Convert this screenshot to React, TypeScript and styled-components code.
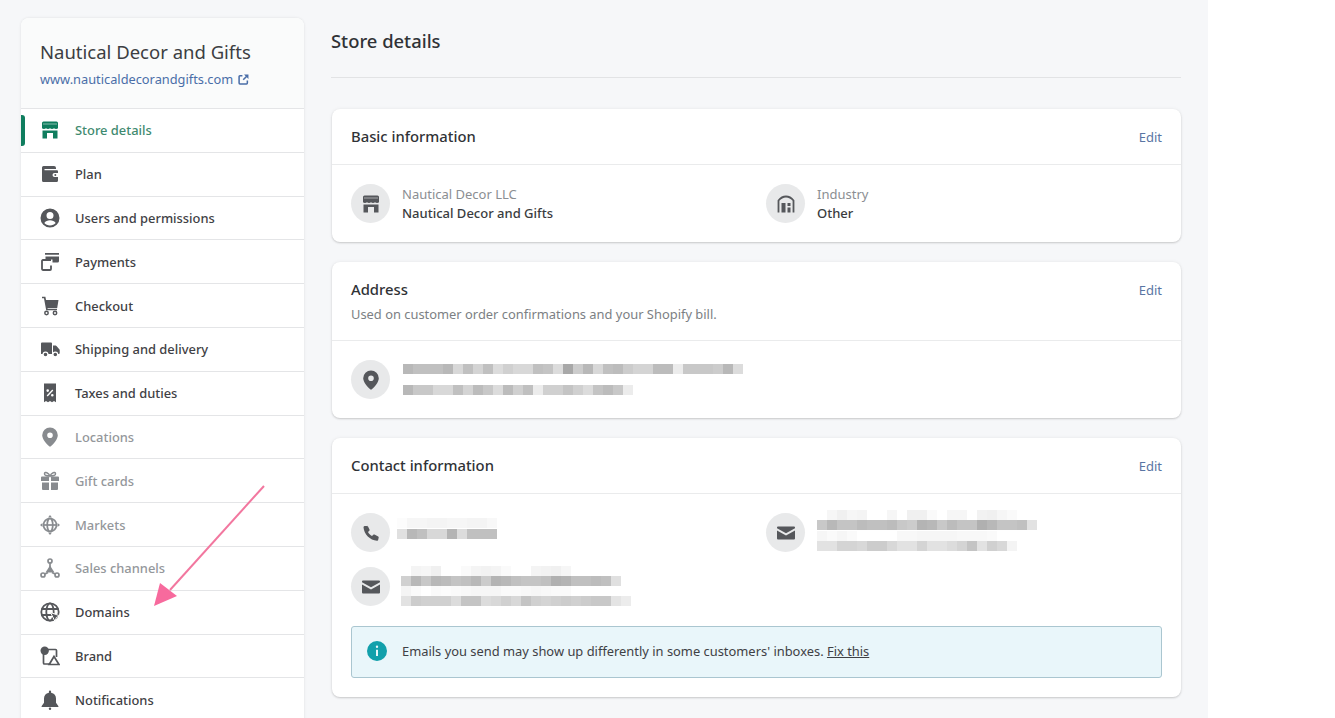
import React from 'react';
import styled, { createGlobalStyle } from 'styled-components';

const GlobalStyle = createGlobalStyle`
    html, body {
        margin: 0;
        padding: 0;
        background: #fff;
    }
    body {
        font-family: "Noto Sans", "Open Sans", "Liberation Sans", sans-serif;
        color: #303236;
    }
    * {
        box-sizing: border-box;
    }
`;

const Shell = styled.div`
    position: relative;
    display: flex;
    gap: 27px;
    width: 1208px;
    height: 718px;
    padding: 18px 27px 0 21px;
    overflow: hidden;
    background: #f6f7f9;
`;

const Sidebar = styled.aside`
    flex: 0 0 283px;
    align-self: flex-start;
    border-radius: 8px 8px 0 0;
    overflow: hidden;
    background: #fff;
    box-shadow: 0 0 3px rgba(23, 24, 24, 0.1);
`;

const SidebarHead = styled.header`
    height: 90px;
    padding: 21px 19px 0;
    background: #fafbfb;
`;

const ShopName = styled.div`
    font-size: 18.5px;
    line-height: 26px;
    color: #3c3e42;
`;

const ShopLink = styled.a`
    display: flex;
    align-items: center;
    gap: 5px;
    margin-top: 5px;
    font-size: 12.8px;
    line-height: 18px;
    color: #4a6ea8;
`;

const NavRow = styled.div<{ $tone: 'normal' | 'muted' | 'active' }>`
    position: relative;
    display: flex;
    align-items: center;
    gap: 15px;
    height: 43.8px;
    padding-left: 19px;
    border-top: 1px solid #e4e5e7;
    font-size: 12.9px;
    font-weight: 500;
    color: ${(p) =>
        p.$tone === 'active'
            ? '#3f8a70'
            : p.$tone === 'muted'
              ? '#94979b'
              : '#3f4145'};
    svg {
        color: ${(p) =>
            p.$tone === 'active'
                ? '#0f7d5e'
                : p.$tone === 'muted'
                  ? '#888b8f'
                  : '#55575b'};
    }
`;

const ActiveMark = styled.span`
    position: absolute;
    left: 0;
    top: 6px;
    bottom: 6px;
    width: 4px;
    border-radius: 0 3px 3px 0;
    background: #0f7d5e;
`;

const Main = styled.main`
    flex: 0 0 850px;
`;

const PageHead = styled.h1`
    height: 60px;
    margin: 0 0 31px;
    padding-top: 9px;
    border-bottom: 1px solid #e2e3e5;
    font-size: 18.4px;
    font-weight: 500;
    line-height: 28px;
    color: #303236;
`;

const Stack = styled.div`
    display: flex;
    flex-direction: column;
    gap: 20px;
    margin-left: 1px;
`;

const Card = styled.section`
    border-radius: 8px;
    background: #fff;
    box-shadow: 0 0 4px rgba(23, 24, 24, 0.05), 0 1px 2px rgba(23, 24, 24, 0.18);
`;

const CardHead = styled.div<{ $tall?: boolean }>`
    display: flex;
    justify-content: space-between;
    align-items: flex-start;
    height: ${(p) => (p.$tall ? '79px' : '56px')};
    padding: 17px 19px 0;
    border-bottom: 1px solid #eaebec;
`;

const CardTitle = styled.h2`
    margin: 0;
    font-size: 14.8px;
    font-weight: 500;
    line-height: 20px;
    color: #303236;
`;

const CardHint = styled.p`
    margin: 6px 0 0;
    font-size: 12.9px;
    line-height: 18px;
    color: #7c7f84;
`;

const EditLink = styled.a`
    font-size: 13px;
    line-height: 22px;
    color: #5a75a3;
`;

const CardBody = styled.div`
    padding: 19px 19px;
`;

const TwoCols = styled.div`
    display: grid;
    grid-template-columns: 396px 396px;
    grid-auto-rows: 39px;
    column-gap: 19px;
    row-gap: 15px;
`;

const Item = styled.div<{ $gap?: number }>`
    display: flex;
    align-items: center;
    height: 39px;
    gap: ${(p) => p.$gap ?? 12}px;
`;

const IconCircle = styled.div`
    display: flex;
    flex: 0 0 39px;
    justify-content: center;
    align-items: center;
    width: 39px;
    height: 39px;
    border-radius: 50%;
    background: #e8e9ea;
    color: #55575b;
`;

const ItemLabel = styled.div`
    font-size: 13px;
    line-height: 19px;
    color: #8b8e92;
`;

const ItemValue = styled.div`
    font-size: 13px;
    font-weight: 500;
    line-height: 19px;
    color: #3a3c40;
`;

const Blurred = styled.div<{ $lift?: number }>`
    display: flex;
    flex-direction: column;
    filter: blur(0.5px);
    transform: translateY(${(p) => -(p.$lift ?? 0)}px);
`;

const BlurRow = styled.div<{ $space?: number }>`
    display: flex;
    height: 10px;
    margin-top: ${(p) => p.$space ?? 0}px;
`;

const BlurCell = styled.span`
    flex: 0 0 10px;
    height: 100%;
`;

const Banner = styled.div`
    display: flex;
    align-items: center;
    gap: 15px;
    height: 52px;
    margin-top: 20px;
    padding: 0 0 2px 15px;
    border: 1px solid #aac6d0;
    border-radius: 3px;
    background: #e9f6fa;
    font-size: 12.9px;
    color: #3f4145;
    a {
        color: #3f4145;
        text-decoration: underline;
    }
`;

const Glyph = styled.svg<{ $size?: number }>`
    flex: none;
    display: block;
    width: ${(p) => p.$size ?? 20}px;
    height: ${(p) => p.$size ?? 20}px;
    fill: currentColor;
`;

const ArrowMark = styled.svg`
    position: absolute;
    left: 150px;
    top: 480px;
    width: 120px;
    height: 130px;
`;

const StoreIcon = ({ size }: { size?: number }) => (
    <Glyph viewBox="0 0 20 20" $size={size}>
        <path d="M3.500 1.500h13A1.500 1.500 0 0 1 18 3v5.200c-.9.9-2.900.9-4 0-1 .9-3 .9-4 0-1 .9-3 .9-4 0-1.100.9-3.100.9-4 0V3a1.500 1.500 0 0 1 1.500-1.500z" />
        <path d="M3 4h14" stroke="#fff" strokeWidth=".9" opacity=".55" />
        <path d="M2.500 10.500h15V18.500h-4.500V13H7v5.500H2.500z" />
    </Glyph>
);

const PlanIcon = () => (
    <Glyph viewBox="0 0 20 20">
        <path
            fillRule="evenodd"
            d="M3.500 2H14a2 2 0 0 1 2 2v1H4.500v1.200H17A1 1 0 0 1 18 7.200V9h-3.500a2 2 0 0 0 0 4H18v3.500a1.500 1.500 0 0 1-1.500 1.500h-13A1.500 1.500 0 0 1 2 16.500v-13A1.500 1.500 0 0 1 3.500 2z"
        />
        <circle cx="15.300" cy="11" r="1" />
    </Glyph>
);

const UserIcon = () => (
    <Glyph viewBox="0 0 20 20">
        <path
            fillRule="evenodd"
            d="M10 .500a9.500 9.500 0 1 0 0 19 9.500 9.500 0 0 0 0-19zM10 4a3.500 3.500 0 1 1 0 7 3.500 3.500 0 0 1 0-7zM4.300 15c1.200-1.900 3.300-2.700 5.700-2.700s4.500.8 5.700 2.700c-1.400 1.600-3.400 2.500-5.700 2.500s-4.300-.9-5.700-2.500z"
        />
    </Glyph>
);

const PaymentsIcon = () => (
    <Glyph viewBox="0 0 20 20">
        <path d="M5 1h14v1.800H5z" />
        <path d="M5.500 4.500H19V9a1.500 1.500 0 0 1-1.500 1.500h-5V7.500H5.500z" />
        <path
            d="M11 8H2.900a.9.900 0 0 0-.9.900v8.200a.9.900 0 0 0 .9.900H10a1 1 0 0 0 1-1v-3.500"
            fill="none"
            stroke="currentColor"
            strokeWidth="1.800"
        />
    </Glyph>
);

const CartIcon = () => (
    <Glyph viewBox="0 0 20 20">
        <path d="M5.200 4H18.500l-1.300 8H6.500z" />
        <path
            d="M2 1.500h2.700l2.200 12H17"
            fill="none"
            stroke="currentColor"
            strokeWidth="1.700"
        />
        <circle cx="6.500" cy="17" r="1.700" fill="none" stroke="currentColor" strokeWidth="1.500" />
        <circle cx="15" cy="17" r="1.700" fill="none" stroke="currentColor" strokeWidth="1.500" />
    </Glyph>
);

const TruckIcon = () => (
    <Glyph viewBox="0 0 20 20">
        <path d="M2 3.500h9a1 1 0 0 1 1 1V15H1V4.500a1 1 0 0 1 1-1z" />
        <path d="M13 6.500h2.700a1 1 0 0 1 .8.400l3 3.600a1 1 0 0 1 .200.600V14a1 1 0 0 1-1 1h-5.700z" />
        <circle cx="5.500" cy="15.500" r="2.400" stroke="#fff" strokeWidth="1.200" />
        <circle cx="15.300" cy="15.500" r="2.400" stroke="#fff" strokeWidth="1.200" />
    </Glyph>
);

const TaxIcon = () => (
    <Glyph viewBox="0 0 20 20">
        <path
            fillRule="evenodd"
            d="M4 .500h12v18.800l-2-1.300-2 1.300-2-1.300-2 1.300-2-1.300-2 1.300zM12.300 6.500l-5.600 6 1 1 5.600-6zM7.700 6.300a1.300 1.300 0 1 0 0 2.600 1.300 1.300 0 0 0 0-2.600zM12.300 11a1.300 1.300 0 1 0 0 2.600 1.300 1.300 0 0 0 0-2.600z"
        />
    </Glyph>
);

const PinIcon = () => (
    <Glyph viewBox="0 0 20 20">
        <path
            fillRule="evenodd"
            d="M10 .500a7.800 7.800 0 0 0-7.800 7.800c0 4.200 5 9.400 7 11a1.200 1.200 0 0 0 1.600 0c2-1.600 7-6.800 7-11A7.800 7.800 0 0 0 10 .500zm0 5a2.800 2.800 0 1 1 0 5.600 2.800 2.800 0 0 1 0-5.600z"
        />
    </Glyph>
);

const GiftIcon = () => (
    <Glyph viewBox="0 0 20 20">
        <path d="M1 6.500a1 1 0 0 1 1-1h7v4.500H1zM11 5.500h7a1 1 0 0 1 1 1V10h-8zM2 11.500h7V19H3a1 1 0 0 1-1-1zM11 11.500h7V18a1 1 0 0 1-1 1h-6z" />
        <path
            d="M10 5C8.500 1.500 5 .500 4.500 2.500 4 4.500 7 5 10 5c3 0 6-.5 5.500-2.500C15 .500 11.500 1.500 10 5z"
            fill="none"
            stroke="currentColor"
            strokeWidth="1.500"
        />
    </Glyph>
);

const MarketsIcon = () => (
    <Glyph viewBox="0 0 20 20">
        <g fill="none" stroke="currentColor" strokeWidth="1.700">
            <circle cx="10" cy="10" r="6.500" />
            <ellipse cx="10" cy="10" rx="2.800" ry="6.500" />
            <path d="M3.500 10h13" />
        </g>
        <path d="M10 0l2 2.500H8zM10 20l-2-2.500h4zM0 10l2.500-2v4zM20 10l-2.500 2V8z" />
    </Glyph>
);

const ChannelsIcon = () => (
    <Glyph viewBox="0 0 20 20">
        <path d="M10 7.500l4.500 7H5.500z" />
        <g fill="none" stroke="currentColor" strokeWidth="1.700">
            <circle cx="10" cy="3" r="2" />
            <circle cx="3" cy="17" r="2" />
            <circle cx="17" cy="17" r="2" />
            <path d="M10 5v5M5 16l3-1.500M15 16l-3-1.500" />
        </g>
    </Glyph>
);

const DomainsIcon = () => (
    <Glyph viewBox="0 0 20 20">
        <g fill="none" stroke="currentColor" strokeWidth="1.800">
            <circle cx="10" cy="10" r="8.700" />
            <ellipse cx="10" cy="10" rx="3.700" ry="8.700" />
            <path d="M1.500 7h17M1.500 13h17" />
        </g>
        <path d="M10.500 10.500l9.500 3.400-3.600 1.500-1.400 4.100z" stroke="#fff" strokeWidth="1" />
    </Glyph>
);

const BrandIcon = () => (
    <Glyph viewBox="0 0 20 20">
        <path
            d="M6 3.500h9.500a1 1 0 0 1 1 1V11M3.500 8v9a1 1 0 0 0 1 1H9"
            fill="none"
            stroke="currentColor"
            strokeWidth="1.700"
        />
        <circle cx="4.700" cy="4.700" r="4.200" />
        <path
            d="M14 10.500l5 8H9.200z"
            fill="#fff"
            stroke="currentColor"
            strokeWidth="1.700"
        />
    </Glyph>
);

const BellIcon = () => (
    <Glyph viewBox="0 0 20 20">
        <path d="M10 .500a1.100 1.100 0 0 1 1.100 1.100v1.100A6 6 0 0 1 16 8.600v4.200l2.300 3.200a.6.600 0 0 1-.5 1H2.200a.6.600 0 0 1-.5-1L4 12.800V8.600a6 6 0 0 1 4.900-5.900V1.600A1.100 1.100 0 0 1 10 .500z" />
        <circle cx="10" cy="18.800" r="1.200" />
    </Glyph>
);

const IndustryIcon = () => (
    <Glyph viewBox="0 0 20 20">
        <path
            d="M2.500 18.500V6.500c2-2.500 5-4 7.500-4s5.500 1.500 7.500 4v12"
            fill="none"
            stroke="currentColor"
            strokeWidth="1.800"
        />
        <path d="M5.500 9h4v9.500h-4zM11.500 9h3v3h-3zM11.500 13.500h3v5h-3z" />
    </Glyph>
);

const PhoneIcon = () => (
    <Glyph viewBox="0 0 20 20">
        <path d="M6.500 2.500l2 4c.2.4.1.9-.2 1.200L7 9c.8 1.700 2.300 3.200 4 4l1.300-1.300c.3-.3.8-.4 1.200-.2l3.700 1.900c.4.2.6.6.5 1l-.5 2.300c-.1.600-.6 1-1.200 1C9 17.500 3 11 2.500 4.300c0-.6.400-1.100 1-1.200l2-.200c.4-.1.800.1 1 .6z" />
    </Glyph>
);

const MailIcon = () => (
    <Glyph viewBox="0 0 20 20">
        <path d="M1 4.500A1 1 0 0 1 2 3.500h16a1 1 0 0 1 1 1v.8l-9 5-9-5zM1 7.500l9 5 9-5v8a1 1 0 0 1-1 1H2a1 1 0 0 1-1-1z" />
    </Glyph>
);

const InfoGlyph = styled(Glyph)`
    color: #12a0ab;
`;

const InfoIcon = () => (
    <InfoGlyph viewBox="0 0 20 20" $size={20}>
        <path
            fillRule="evenodd"
            d="M10 0a10 10 0 1 0 0 20 10 10 0 0 0 0-20zm0 4.500a1.200 1.200 0 1 1 0 2.400 1.200 1.200 0 0 1 0-2.400zM9 8.700h2V15H9z"
        />
    </InfoGlyph>
);

const ExternalIcon = () => (
    <Glyph viewBox="0 0 20 20" $size={11}>
        <path
            d="M8 3H3.500A1.500 1.500 0 0 0 2 4.500v12A1.500 1.500 0 0 0 3.500 18h12a1.500 1.500 0 0 0 1.500-1.500V12"
            fill="none"
            stroke="currentColor"
            strokeWidth="2.800"
        />
        <path d="M11 1h8v8l-3-3-5.500 5.500-2-2L14 4z" />
    </Glyph>
);

const navItems: { label: string; icon: React.ReactElement; tone: 'normal' | 'muted' | 'active' }[] = [
    { label: 'Store details', icon: <StoreIcon />, tone: 'active' },
    { label: 'Plan', icon: <PlanIcon />, tone: 'normal' },
    { label: 'Users and permissions', icon: <UserIcon />, tone: 'normal' },
    { label: 'Payments', icon: <PaymentsIcon />, tone: 'normal' },
    { label: 'Checkout', icon: <CartIcon />, tone: 'normal' },
    { label: 'Shipping and delivery', icon: <TruckIcon />, tone: 'normal' },
    { label: 'Taxes and duties', icon: <TaxIcon />, tone: 'normal' },
    { label: 'Locations', icon: <PinIcon />, tone: 'muted' },
    { label: 'Gift cards', icon: <GiftIcon />, tone: 'muted' },
    { label: 'Markets', icon: <MarketsIcon />, tone: 'muted' },
    { label: 'Sales channels', icon: <ChannelsIcon />, tone: 'muted' },
    { label: 'Domains', icon: <DomainsIcon />, tone: 'normal' },
    { label: 'Brand', icon: <BrandIcon />, tone: 'normal' },
    { label: 'Notifications', icon: <BellIcon />, tone: 'normal' },
];

// grey levels of the pixelated (redacted) text, one number per 10px block
const addressLines = [
    [184, 192, 192, 192, 184, 216, 192, 212, 192, 220, 208, 216, 216, 192, 196, 220, 168, 204, 184, 216, 192, 188, 204, 212, 212, 188, 188, 236, 200, 200, 200, 204, 184, 220],
    [184, 200, 200, 216, 216, 192, 212, 188, 200, 220, 188, 208, 192, 236, 208, 208, 196, 208, 220, 196, 188, 200, 236],
];
const phoneLines = [
    [252, 246, 246, 244, 244, 246, 246, 244, 244, 248],
    [224, 184, 192, 216, 216, 180, 220, 192, 192, 192],
];
const mailRightLines = [
    [255, 246, 240, 246, 244, 255, 255, 246, 255, 240, 240, 250, 255, 246, 246, 255, 242, 240, 246, 250, 255, 255],
    [200, 184, 196, 196, 188, 192, 192, 188, 200, 204, 180, 184, 200, 188, 196, 196, 176, 184, 196, 196, 192, 226],
    [246, 250, 246, 250, 255, 255, 255, 255, 248, 248, 246, 246, 246, 246, 248, 248, 248, 250, 255, 255],
    [226, 226, 212, 212, 216, 204, 204, 216, 226, 226, 212, 226, 226, 220, 212, 196, 226, 208, 216, 244],
];
const mailLeftLines = [
    [255, 244, 246, 240, 255, 255, 250, 244, 242, 244, 250, 255, 255, 244, 242, 240, 246, 255, 255, 255, 255, 255],
    [208, 184, 200, 184, 188, 196, 192, 184, 204, 180, 184, 192, 196, 196, 192, 176, 180, 192, 192, 188, 192, 224],
    [244, 250, 255, 250, 252, 250, 248, 246, 246, 246, 250, 250, 248, 246, 248, 250, 250, 255, 255, 255, 255, 255],
    [226, 204, 208, 208, 208, 220, 196, 196, 220, 216, 208, 216, 196, 208, 212, 208, 204, 208, 204, 200, 200, 228, 236],
];

const Pixelated: React.FC<{ lines: number[][]; gap?: number; lift?: number }> = ({
    lines,
    gap,
    lift,
}) => (
    <Blurred $lift={lift}>
        {lines.map((line, i) => (
            <BlurRow key={i} $space={i > 0 ? gap : 0}>
                {line.map((v, j) => (
                    <BlurCell key={j} style={{ background: `rgb(${v},${v},${v})` }} />
                ))}
            </BlurRow>
        ))}
    </Blurred>
);

export default function App() {
    return (
        <>
            <GlobalStyle />
            <Shell>
                <Sidebar>
                    <SidebarHead>
                        <ShopName>Nautical Decor and Gifts</ShopName>
                        <ShopLink>
                            www.nauticaldecorandgifts.com <ExternalIcon />
                        </ShopLink>
                    </SidebarHead>
                    {navItems.map((item) => (
                        <NavRow key={item.label} $tone={item.tone}>
                            {item.tone === 'active' && <ActiveMark />}
                            {item.icon}
                            {item.label}
                        </NavRow>
                    ))}
                </Sidebar>

                <Main>
                    <PageHead>Store details</PageHead>
                    <Stack>
                        <Card>
                            <CardHead>
                                <CardTitle>Basic information</CardTitle>
                                <EditLink>Edit</EditLink>
                            </CardHead>
                            <CardBody>
                                <TwoCols>
                                    <Item>
                                        <IconCircle>
                                            <StoreIcon />
                                        </IconCircle>
                                        <div>
                                            <ItemLabel>Nautical Decor LLC</ItemLabel>
                                            <ItemValue>Nautical Decor and Gifts</ItemValue>
                                        </div>
                                    </Item>
                                    <Item>
                                        <IconCircle>
                                            <IndustryIcon />
                                        </IconCircle>
                                        <div>
                                            <ItemLabel>Industry</ItemLabel>
                                            <ItemValue>Other</ItemValue>
                                        </div>
                                    </Item>
                                </TwoCols>
                            </CardBody>
                        </Card>

                        <Card>
                            <CardHead $tall>
                                <div>
                                    <CardTitle>Address</CardTitle>
                                    <CardHint>
                                        Used on customer order confirmations and your Shopify bill.
                                    </CardHint>
                                </div>
                                <EditLink>Edit</EditLink>
                            </CardHead>
                            <CardBody>
                                <Item $gap={13}>
                                    <IconCircle>
                                        <PinIcon />
                                    </IconCircle>
                                    <Pixelated lines={addressLines} gap={11} />
                                </Item>
                            </CardBody>
                        </Card>

                        <Card>
                            <CardHead>
                                <CardTitle>Contact information</CardTitle>
                                <EditLink>Edit</EditLink>
                            </CardHead>
                            <CardBody>
                                <TwoCols>
                                    <Item $gap={7}>
                                        <IconCircle>
                                            <PhoneIcon />
                                        </IconCircle>
                                        <Pixelated lines={phoneLines} gap={1} lift={4} />
                                    </Item>
                                    <Item>
                                        <IconCircle>
                                            <MailIcon />
                                        </IconCircle>
                                        <Pixelated lines={mailRightLines} gap={0.5} lift={2} />
                                    </Item>
                                    <Item $gap={11}>
                                        <IconCircle>
                                            <MailIcon />
                                        </IconCircle>
                                        <Pixelated lines={mailLeftLines} lift={1} />
                                    </Item>
                                </TwoCols>
                                <Banner>
                                    <InfoIcon />
                                    <span>
                                        Emails you send may show up differently in some customers'
                                        inboxes. <a>Fix this</a>
                                    </span>
                                </Banner>
                            </CardBody>
                        </Card>
                    </Stack>
                </Main>

                <ArrowMark viewBox="150 480 120 130">
                    <path d="M264 486L170 590" stroke="#f2779f" strokeWidth="2" fill="none" />
                    <path d="M154 606L160 583L177 596z" fill="#f76a9d" />
                </ArrowMark>
            </Shell>
        </>
    );
}
